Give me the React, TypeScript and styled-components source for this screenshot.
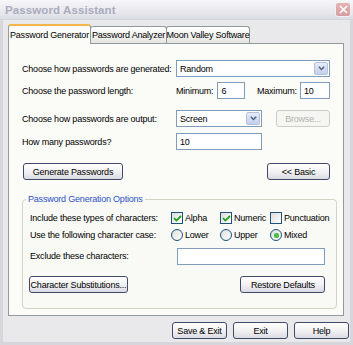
import React from "react";
import styled, { createGlobalStyle, css } from "styled-components";

const GlobalStyle = createGlobalStyle`
  html, body { margin: 0; padding: 0; }
  body {
    width: 353px;
    height: 345px;
    overflow: hidden;
    font-family: "Liberation Sans", Arial, sans-serif;
    font-size: 9px;
    letter-spacing: -0.2px;
    color: #000;
  }
  * { box-sizing: border-box; }
`;

const Window = styled.div`
  width: 353px;
  height: 345px;
  background: #e9e9ec;
  border-left: 3px solid #d6d6dc;
  border-right: 3px solid #d6d6dc;
  border-bottom: 3px solid #d6d6dc;
  display: flex;
  flex-direction: column;
`;

const TitleBar = styled.div`
  height: 20px;
  margin: 0 -3px;
  padding: 0 2px 0 5px;
  display: flex;
  align-items: center;
  justify-content: space-between;
  background: linear-gradient(#f7f7f9, #e6e6ec 70%, #dcdce4);
  border-bottom: 1px solid #d4d4dc;
`;

const Title = styled.span`
  font-size: 11.5px;
  font-weight: bold;
  color: #a9acbd;
  letter-spacing: 0.1px;
`;

const CloseBtn = styled.div`
  width: 16px;
  height: 15px;
  border-radius: 3px;
  border: 1px solid #f2f2f4;
  background: linear-gradient(#e6b4b6, #d79c9f);
  display: flex;
  align-items: center;
  justify-content: center;
`;

const Body = styled.div`
  flex: 1;
  padding: 4px 6px 0 5px;
  display: flex;
  flex-direction: column;
`;

const Tabs = styled.div`
  display: flex;
  align-items: flex-end;
  height: 19px;
  position: relative;
  z-index: 1;
`;

const Tab = styled.div<{ $active?: boolean; $w: number }>`
  width: ${(p) => p.$w}px;
  height: 17px;
  border: 1px solid #919b9c;
  border-bottom: none;
  border-radius: 3px 3px 0 0;
  display: flex;
  align-items: center;
  justify-content: center;
  white-space: nowrap;
  ${(p) =>
    p.$active
      ? css`
          background: #fbfbf8;
          border-top: 2px solid #f4b54a;
          height: 20px;
          margin-bottom: -1px;
          padding-bottom: 1px;
        `
      : css`
          background: linear-gradient(#ffffff, #f0f0ee 60%, #e4e4e0);
          margin-left: -1px;
        `}
`;

const Panel = styled.div`
  width: 336px;
  height: 273px;
  border: 1px solid #919b9c;
  background: #fbfbf8;
  padding: 16px 13px 0 13px;
  display: flex;
  flex-direction: column;
`;

const Row = styled.div<{ $mt?: number }>`
  display: flex;
  align-items: center;
  height: 17px;
  margin-top: ${(p) => p.$mt ?? 0}px;
`;

const Label = styled.span<{ $w: number }>`
  width: ${(p) => p.$w}px;
  flex: none;
  white-space: nowrap;
`;

const Select = styled.div<{ $w: number }>`
  width: ${(p) => p.$w}px;
  height: 17px;
  border: 1px solid #7f9db9;
  background: #fff;
  display: flex;
  align-items: center;
  justify-content: space-between;
  padding: 0 1px 0 3px;
`;

const DropBtn = styled.div`
  width: 14px;
  height: 13px;
  border: 1px solid #b6c2dc;
  border-radius: 2px;
  background: linear-gradient(#e6ecf8, #c3cfea);
  display: flex;
  align-items: center;
  justify-content: center;
`;

const Input = styled.div<{ $w: number; $ml?: number }>`
  width: ${(p) => p.$w}px;
  height: 17px;
  margin-left: ${(p) => p.$ml ?? 0}px;
  border: 1px solid #7f9db9;
  background: #fff;
  display: flex;
  align-items: center;
  padding: 0 3px;
`;

const Text = styled.span<{ $ml?: number }>`
  margin-left: ${(p) => p.$ml ?? 0}px;
  white-space: nowrap;
`;

const Button = styled.div<{ $w: number; $disabled?: boolean; $ml?: number; $mr?: number }>`
  width: ${(p) => p.$w}px;
  height: 17px;
  margin-left: ${(p) => p.$ml ?? 0}px;
  margin-right: ${(p) => p.$mr ?? 0}px;
  border: 1px solid ${(p) => (p.$disabled ? "#cdcdc6" : "#3e4a68")};
  border-radius: 3px;
  background: ${(p) =>
    p.$disabled ? "#f5f5f1" : "linear-gradient(#ffffff, #f2f2f4 50%, #dadae2)"};
  color: ${(p) => (p.$disabled ? "#b4b4aa" : "#000")};
  display: flex;
  align-items: center;
  justify-content: center;
  white-space: nowrap;
  flex: none;
`;

const ButtonRow = styled.div<{ $mt: number }>`
  display: flex;
  justify-content: space-between;
  margin-top: ${(p) => p.$mt}px;
`;

const Group = styled.fieldset`
  margin: 14px 0 0 0;
  width: 310px;
  height: 115px;
  border: 1px solid #d5d3c6;
  border-radius: 4px;
  padding: 4px 7px 0 7px;
  background: #f9f9f5;
  display: flex;
  flex-direction: column;
`;

const Legend = styled.legend`
  color: #2c52c4;
  padding: 0 2px;
  margin-left: -4px;
`;

const GroupRow = styled.div<{ $mt?: number }>`
  display: flex;
  align-items: center;
  height: 16px;
  margin-top: ${(p) => p.$mt ?? 0}px;
`;

const Options = styled.div`
  display: grid;
  grid-template-columns: 49px 50px auto;
  align-items: center;
`;

const Option = styled.div`
  display: flex;
  align-items: center;
  gap: 2px;
`;

const Box = styled.div`
  width: 12px;
  height: 12px;
  border: 1px solid #1c5180;
  background: linear-gradient(135deg, #dcdcd7, #ffffff);
  display: flex;
  align-items: center;
  justify-content: center;
`;

const Radio = styled.div`
  width: 12px;
  height: 12px;
  border-radius: 50%;
  border: 1px solid #1c5180;
  background: linear-gradient(135deg, #dcdcd7, #ffffff);
  display: flex;
  align-items: center;
  justify-content: center;
`;

const Dot = styled.div`
  width: 5px;
  height: 5px;
  border-radius: 50%;
  background: radial-gradient(#5ccd5c, #21a121);
`;

const Footer = styled.div`
  display: flex;
  justify-content: flex-end;
  gap: 6px;
  margin-top: 6px;
  margin-right: -5px;
`;

const Check = () => (
  <svg width="9" height="9" viewBox="0 0 9 9">
    <path d="M1 4.2 L3.4 6.6 L8 2" stroke="#21a121" strokeWidth="1.8" fill="none" />
  </svg>
);

const Chevron = () => (
  <svg width="7" height="5" viewBox="0 0 7 5">
    <path d="M0.8 0.8 L3.5 3.5 L6.2 0.8" stroke="#4d6185" strokeWidth="1.5" fill="none" />
  </svg>
);

export default function App() {
  return (
    <>
      <GlobalStyle />
      <Window>
        <TitleBar>
          <Title>Password Assistant</Title>
          <CloseBtn>
            <svg width="9" height="9" viewBox="0 0 9 9">
              <path d="M1 1 L8 8 M8 1 L1 8" stroke="#fff" strokeWidth="1.6" />
            </svg>
          </CloseBtn>
        </TitleBar>
        <Body>
          <Tabs>
            <Tab $active $w={83}>Password Generator</Tab>
            <Tab $w={77}>Password Analyzer</Tab>
            <Tab $w={84}>Moon Valley Software</Tab>
          </Tabs>
          <Panel>
            <Row>
              <Label $w={154}>Choose how passwords are generated:</Label>
              <Select $w={157}>
                <span>Random</span>
                <DropBtn><Chevron /></DropBtn>
              </Select>
            </Row>
            <Row $mt={5}>
              <Label $w={154}>Choose the password length:</Label>
              <Text>Minimum:</Text>
              <Input $w={31} $ml={4}>6</Input>
              <Text $ml={12}>Maximum:</Text>
              <Input $w={34} $ml={3}>10</Input>
            </Row>
            <Row $mt={11}>
              <Label $w={154}>Choose how passwords are output:</Label>
              <Select $w={86}>
                <span>Screen</span>
                <DropBtn><Chevron /></DropBtn>
              </Select>
              <Button $w={54} $ml={14} $disabled>Browse...</Button>
            </Row>
            <Row $mt={6}>
              <Label $w={154}>How many passwords?</Label>
              <Input $w={86}>10</Input>
            </Row>
            <ButtonRow $mt={13}>
              <Button $w={100} $ml={1}>Generate Passwords</Button>
              <Button $w={63}>&lt;&lt; Basic</Button>
            </ButtonRow>
            <Group>
              <Legend>Password Generation Options</Legend>
              <GroupRow $mt={2}>
                <Label $w={141}>Include these types of characters:</Label>
                <Options>
                  <Option><Box><Check /></Box>Alpha</Option>
                  <Option><Box><Check /></Box>Numeric</Option>
                  <Option><Box />Punctuation</Option>
                </Options>
              </GroupRow>
              <GroupRow $mt={1}>
                <Label $w={141}>Use the following character case:</Label>
                <Options>
                  <Option><Radio />Lower</Option>
                  <Option><Radio />Upper</Option>
                  <Option><Radio><Dot /></Radio>Mixed</Option>
                </Options>
              </GroupRow>
              <GroupRow $mt={5}>
                <Label $w={141}>Exclude these characters:</Label>
                <Input $w={148} $ml={6} />
              </GroupRow>
              <ButtonRow $mt={12}>
                <Button $w={99} $ml={-1}>Character Substitutions...</Button>
                <Button $w={85} $mr={4}>Restore Defaults</Button>
              </ButtonRow>
            </Group>
          </Panel>
          <Footer>
            <Button $w={55}>Save &amp; Exit</Button>
            <Button $w={55}>Exit</Button>
            <Button $w={55}>Help</Button>
          </Footer>
        </Body>
      </Window>
    </>
  );
}
